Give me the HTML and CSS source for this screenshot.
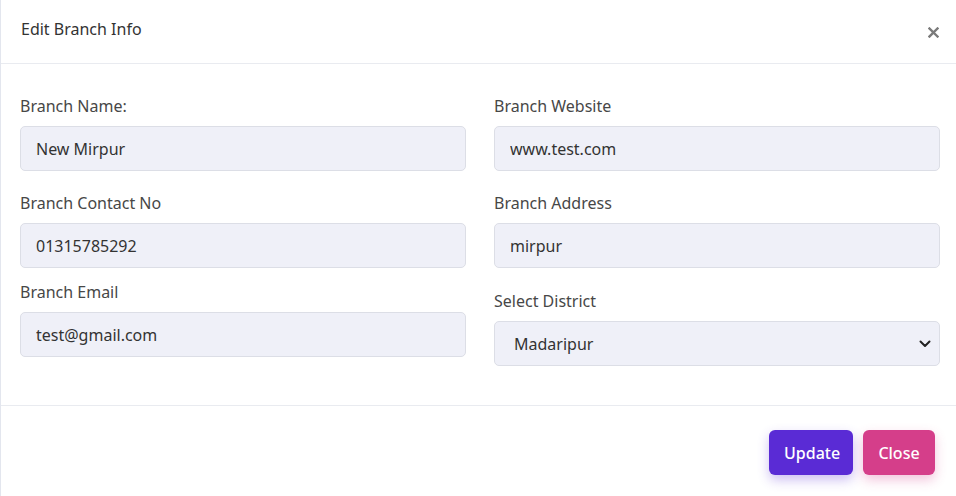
FILE: index.html
```html
<!DOCTYPE html>
<html>
<head>
<meta charset="utf-8">
<link rel="stylesheet" href="styles.css">
</head>
<body>
<div class="modal">
  <div class="modal-header">
    <h5 class="modal-title">Edit Branch Info</h5>
    <button class="btn-x" aria-label="Close">
      <svg width="11" height="11" viewBox="0 0 11 11"><path d="M1.5 1.5 L9.5 9.5 M9.5 1.5 L1.5 9.5" stroke="#7a7a7a" stroke-width="2.4" stroke-linecap="square"/></svg>
    </button>
  </div>
  <div class="modal-body">
    <div class="col">
      <div class="group g1">
        <label>Branch Name:</label>
        <input class="field" value="New Mirpur">
      </div>
      <div class="group g2">
        <label>Branch Contact No</label>
        <input class="field" value="01315785292">
      </div>
      <div class="group">
        <label>Branch Email</label>
        <input class="field" value="test@gmail.com">
      </div>
    </div>
    <div class="col">
      <div class="group g1">
        <label>Branch Website</label>
        <input class="field" value="www.test.com">
      </div>
      <div class="group g3">
        <label>Branch Address</label>
        <input class="field" value="mirpur">
      </div>
      <div class="group">
        <label>Select District</label>
        <div class="select">
          <span>Madaripur</span>
          <svg width="12" height="8" viewBox="0 0 12 8"><path d="M1.5 1.5 L6 6 L10.5 1.5" fill="none" stroke="#222" stroke-width="2" stroke-linecap="round" stroke-linejoin="round"/></svg>
        </div>
      </div>
    </div>
  </div>
  <div class="modal-footer">
    <button class="btn btn-update">Update</button>
    <button class="btn btn-close">Close</button>
  </div>
</div>
</body>
</html>
```
FILE: styles.css
```css
* { box-sizing: border-box; }
html, body { margin: 0; padding: 0; background: #fff; }
body {
  font-family: "Noto Sans", "Open Sans", sans-serif;
  color: #3b3b3b;
  width: 956px;
  height: 496px;
  overflow: hidden;
}
.modal {
  border-left: 1px solid #e3e6ee;
  height: 496px;
}
.modal-header {
  height: 64px;
  border-bottom: 1px solid #e9ebf0;
  display: flex;
  align-items: flex-start;
  justify-content: space-between;
  padding: 17px 17px 0 20px;
}
.modal-title {
  margin: 0;
  font-size: 16px;
  font-weight: 400;
  color: #333;
  line-height: 24px;
}
.btn-x {
  border: 0;
  background: none;
  padding: 0;
  margin-top: 10px;
  width: 11px;
  height: 11px;
  display: flex;
}
.modal-body {
  display: flex;
  gap: 28px;
  padding: 32px 16px 0 19px;
  height: 342px;
  border-bottom: 1px solid #e9ebf0;
}
.col { width: 446px; display: flex; flex-direction: column; }
.group { display: flex; flex-direction: column; }
.group.g1 { margin-bottom: 22px; }
.group.g2 { margin-bottom: 14px; }
.group.g3 { margin-bottom: 23px; }
label {
  font-size: 16px;
  line-height: 20px;
  color: #474747;
  margin-bottom: 10px;
}
.field, .select {
  height: 45px;
  width: 446px;
  background: #eff0f8;
  border: 1px solid #dcdee6;
  border-radius: 5px;
  font-family: inherit;
  font-size: 16px;
  color: #333;
  padding: 0 15px;
}
.select {
  display: flex;
  align-items: center;
  justify-content: space-between;
  padding: 0 8px 0 19px;
}
.modal-footer {
  display: flex;
  justify-content: flex-end;
  gap: 10px;
  padding: 24px 21px 0 0;
}
.btn {
  height: 45px;
  border: 0;
  border-radius: 6px;
  color: #fff;
  font-family: inherit;
  font-size: 16px;
  font-weight: 500;
  padding: 0 15px;
}
.btn-update {
  width: 84px;
  background: #5a2bd5;
  box-shadow: 0 5px 12px rgba(90, 43, 213, 0.3);
}
.btn-close {
  width: 72px;
  background: #d53e8a;
  box-shadow: 0 5px 12px rgba(213, 62, 138, 0.3);
}
```
